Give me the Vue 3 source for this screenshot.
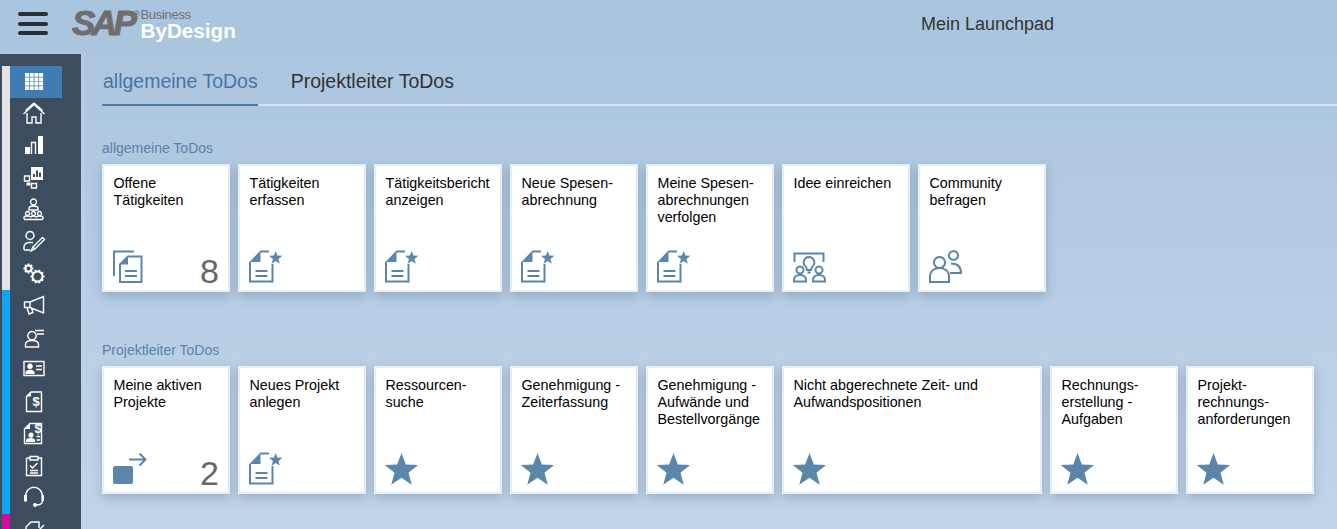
<script setup>
// star polygon, used by the tiles and the doc icons
const star = (cx, cy, R) => {
  let d = ''
  for (let i = 0; i < 10; i++) {
    const r = i % 2 ? R * 0.42 : R
    const a = -Math.PI / 2 + (i * Math.PI) / 5
    d += (i ? 'L' : 'M') + (cx + r * Math.cos(a)).toFixed(2) + ' ' + (cy + r * Math.sin(a)).toFixed(2)
  }
  return d + 'Z'
}

const gear = (cx, cy, r, n) => {
  let d = `M${cx - r} ${cy}a${r} ${r} 0 1 0 ${2 * r} 0a${r} ${r} 0 1 0 ${-2 * r} 0`
  for (let i = 0; i < n; i++) {
    const a = (i * 2 * Math.PI) / n
    const c = Math.cos(a)
    const s = Math.sin(a)
    d += `M${(cx + r * c).toFixed(2)} ${(cy + r * s).toFixed(2)}L${(cx + (r + 2) * c).toFixed(2)} ${(cy + (r + 2) * s).toFixed(2)}`
  }
  return d
}

const gridSquares = () => {
  let d = ''
  for (let y = 0; y < 4; y++) {
    for (let x = 0; x < 4; x++) {
      d += `M${3 + x * 4.7} ${3 + y * 4.4}h4v3.8h-4z`
    }
  }
  return d
}

const navTop = [
  { f: gridSquares() },
  { s: 'M1.5 12L12 2.5L22.5 12M3.5 8.5L12 1M12 1L20.500 8.500M5 11V21H10V15H14V21H19V11' },
  { s: 'M9.500 20V8.500H13.500V20', f: 'M3 13h5v7H3zM16 2h5v18h-5z' },
  { s: 'M2.500 10h5v5h-5zM9.500 17.500h5v4.500h-5z', f: 'M9 1h12v13H9zM4.500 16.500h4v3h-4z', d: 'M12 11V8M15 11V4.500M18 11V6.500' },
  { s: 'M11.500 1a3 3 0 1 0 .01 0M7 12v-1.500c0-1.500 2-2.500 4.500-2.500s4.500 1 4.500 2.500V12H7zM5.500 13.500a2 2 0 1 0 .01 0M11.500 13.500a2 2 0 1 0 .01 0M17.500 13.500a2 2 0 1 0 .01 0M2 21v-1.500c0-1 1.500-1.500 3.500-1.500s3 .5 3 1.500M9 19.500c0-1 1-1.500 2.500-1.500s2.500.5 2.500 1.500M14.500 19.500c0-1 1-1.500 3-1.500s3.500.5 3.500 1.500V21M2 21.500h19' },
  { s: 'M8 1.500a4 4 0 1 0 .01 0M2 20v-3c0-3 2.500-4.500 6-4.500h3M2 20h6M9 21l2-4 9.500-9.500 2 2L13 19zM11 17l2 2' },
  { s: gear(6.500, 6.500, 3, 8) + gear(15.500, 14.500, 5, 10), sw: 2 },
  { s: 'M21.500 2.500V19L8 13.500H2.500V8H8zM8 8V13.500M5 13.500L7 20L11 18.500L9.500 14' },
  { s: 'M10 5.500a4.200 4.200 0 1 0 .01 0M3.500 21v-2.500c0-2.500 2.500-4 6.500-4s6.500 1.500 6.500 4V21zM13 4.500h9M15 8h7' },
  { s: 'M2 3.500h20v14H2zM14 8h6M14 11.500h6', f: 'M8 5.500a2.800 2.800 0 1 1 -.01 0zM3.500 16v-1.500c0-2 2-2.800 4.500-2.800s4.500.8 4.500 2.800V16z' },
  { s: 'M9 2H19.500V21.500H4.500V6.500z', f: 'M4.500 6.500L9 2V6.500z', t: '$', tx: 14, ty: 15.500 },
  { s: 'M8 1.500H19.500V21.500H2.500V7z', f: 'M2.500 7L8 1.500V7zM9 10.500a2.600 2.600 0 1 1 -.01 0zM4 20v-1.500c0-1.800 2-2.500 4.500-2.500s4.500.7 4.500 2.500V20z', t: '$', tx: 16, ty: 11, extra: 'M14.500 14.500h3.500M14.500 18h3.500' },
  { s: 'M4.500 4H8M16 4h3.500V21.500H4.500V4M8 2.500h8V6H8zM8 11.500l2.500 2.500 5-5M8 16.500h8M8 19h8' },
  {
    s: 'M3.500 11C3.500 -2 20.500 -2 20.500 11V15C20.500 18 17 19 14 19',
    f: 'M2 9h3v6.500H2zM19.500 9H22v6h-2.500zM13 17a2 2 0 1 1 -.01 0z'
  },
  { s: 'M4 22V9L9 4H17V10M19 22V14', extra: 'M14 15L22 7' },
  { s: 'M3 21V9H21V21M6 9V2H15L18 5V9' }
]

const itemColor = (i) => (i < 7 ? 'gray' : i < 14 ? 'blue' : 'pink')

const docStack = {
  s: 'M1 26V1.500H21M15 6.500H28.500V32H7V14.500zM12 21H24M12 26H24',
  f: 'M7 14.500L15 6.500V14.500z'
}
const docStar = {
  s: 'M1 12V31.500H23.500V14M11 1.500H20M6.500 21H18.500M6.500 26H18.500',
  f: 'M.5 12L11.500 .5V12z' + star(26.700, 8, 7)
}
const bigStar = { f: star(16.500, 18.500, 17.500) }
const idea = {
  s: 'M1.500 12V3.500H30.500V12M16 7a5.500 5.500 0 0 0 -3 10l1 3h4l1 -3a5.500 5.500 0 0 0 -3 -10M14.500 22.500h3M7 16.500a3.500 3.500 0 1 0 .01 0M1 31.500v-1.500c0-3 2.500-5 6-5s6 2 6 5v1.500zM26 16.500a3.500 3.500 0 1 0 .01 0M20 31.500v-1.500c0-3 2.500-5 6-5s6 2 6 5v1.500z'
}
const people = {
  s: 'M10.500 7a5.500 5.500 0 1 0 .01 0M1 32v-5c0-6 4-9 9.500-9s9.500 3 9.500 9v5zM24.500 1a4.500 4.500 0 1 0 .01 0M22 13.500c6 0 10 2.500 10 9.500H21'
}
const moveOut = {
  s: 'M16 7.500H32M26.500 1.500L32.500 7.500L26.500 13.500',
  f: 'M2 14H18a2 2 0 0 1 2 2V30a2 2 0 0 1 -2 2H2a2 2 0 0 1 -2 -2V16a2 2 0 0 1 2 -2z'
}

const groups = [
  {
    title: 'allgemeine ToDos',
    tiles: [
      { lines: 'Offene Tätigkeiten', icon: docStack, count: 8 },
      { lines: 'Tätigkeiten erfassen', icon: docStar },
      { lines: 'Tätigkeitsbericht anzeigen', icon: docStar },
      { lines: 'Neue Spesen-abrechnung', icon: docStar },
      { lines: 'Meine Spesen-abrechnungen verfolgen', icon: docStar },
      { lines: 'Idee einreichen', icon: idea },
      { lines: 'Community befragen', icon: people }
    ]
  },
  {
    title: 'Projektleiter ToDos',
    tiles: [
      { lines: 'Meine aktiven Projekte', icon: moveOut, count: 2 },
      { lines: 'Neues Projekt anlegen', icon: docStar },
      { lines: 'Ressourcen-suche', icon: bigStar },
      { lines: 'Genehmigung - Zeiterfassung', icon: bigStar },
      { lines: 'Genehmigung - Aufwände und Bestellvorgänge', icon: bigStar },
      { lines: 'Nicht abgerechnete Zeit- und Aufwandspositionen', icon: bigStar, wide: true },
      { lines: 'Rechnungs-erstellung - Aufgaben', icon: bigStar },
      { lines: 'Projekt-rechnungs-anforderungen', icon: bigStar }
    ]
  }
]
</script>

<template>
  <div class="page">
    <header class="topbar">
      <button class="burger"><span></span><span></span><span></span></button>
      <div class="logo">
        <span class="sap">SAP</span>
        <span class="reg">®</span>
        <div class="product">
          <span class="business">Business</span>
          <span class="bydesign">ByDesign</span>
        </div>
      </div>
      <div class="page-title">Mein Launchpad</div>
    </header>

    <div class="body">
      <nav class="sidebar">
        <div
          v-for="(item, i) in navTop"
          :key="i"
          class="nav-item"
          :class="[itemColor(i), { selected: i === 0 }]"
        >
          <svg width="24" height="24" viewBox="0 0 24 24">
            <path v-if="item.f" :d="item.f" fill="#fff" fill-rule="evenodd" />
            <path v-if="item.s" :d="item.s" fill="none" stroke="#fff" :stroke-width="item.sw || 1.4" />
            <path v-if="item.extra" :d="item.extra" fill="none" stroke="#fff" stroke-width="1.4" />
            <path v-if="item.d" :d="item.d" fill="none" stroke="#3c4d5f" stroke-width="2" />
            <text v-if="item.t" :x="item.tx" :y="item.ty" class="dollar">{{ item.t }}</text>
          </svg>
        </div>
      </nav>

      <main class="content">
        <div class="tabs">
          <div class="tab active">allgemeine ToDos</div>
          <div class="tab">Projektleiter ToDos</div>
        </div>

        <section v-for="group in groups" :key="group.title" class="group">
          <h2>{{ group.title }}</h2>
          <div class="tiles">
            <div
              v-for="tile in group.tiles"
              :key="tile.lines"
              class="tile"
              :class="{ wide: tile.wide }"
            >
              <div class="tile-title">{{ tile.lines }}</div>
              <div class="tile-foot">
                <svg width="34" height="33" viewBox="0 0 34 33">
                  <path v-if="tile.icon.f" :d="tile.icon.f" fill="#5b85ab" />
                  <path v-if="tile.icon.s" :d="tile.icon.s" fill="none" stroke="#5b85ab" stroke-width="2" />
                </svg>
                <span v-if="tile.count" class="count">{{ tile.count }}</span>
              </div>
            </div>
          </div>
        </section>
      </main>
    </div>
  </div>
</template>

<style scoped>
.page {
  height: 529px;
  overflow: hidden;
  background: linear-gradient(180deg, #a9c4de 0%, #c1d5e8 100%);
  font-family: "Liberation Sans", Arial, sans-serif;
  color: #000;
}

.topbar {
  height: 54px;
  display: flex;
  align-items: flex-start;
  position: relative;
}

.burger {
  width: 30px;
  margin: 12px 0 0 18px;
  padding: 0;
  border: none;
  background: none;
  display: flex;
  flex-direction: column;
  gap: 5.5px;
}

.burger span {
  display: block;
  height: 4px;
  border-radius: 2px;
  background: #2b2f33;
}

.logo {
  display: flex;
  margin-left: 24px;
  height: 54px;
}

.sap {
  font-size: 35px;
  line-height: 46px;
  font-weight: 700;
  font-style: italic;
  letter-spacing: -3.5px;
  color: #6e6e6e;
  -webkit-text-stroke: 1px #6e6e6e;
}

.reg {
  width: 7px;
  font-size: 9px;
  line-height: 10px;
  margin-top: 9px;
  color: #6e6e6e;
}

.product {
  display: flex;
  flex-direction: column;
  padding-top: 8px;
}

.business {
  font-size: 13px;
  line-height: 13px;
  letter-spacing: -0.3px;
  color: #6e6e6e;
}

.bydesign {
  font-size: 20.7px;
  line-height: 19px;
  font-weight: 700;
  color: #fff;
}

.page-title {
  position: absolute;
  left: 921px;
  top: 13px;
  font-size: 18px;
  line-height: 22px;
  color: #333;
}

.body {
  display: flex;
}

.sidebar {
  width: 79px;
  height: 475px;
  padding: 12px 0 0 2px;
  background: #3c4d5f;
  box-shadow: 3px 0 3px rgba(200, 215, 235, 0.5);
  overflow: hidden;
  flex-shrink: 0;
}

.nav-item {
  width: 40px;
  height: 32px;
  border-left: 8px solid #e3e3e3;
  display: flex;
  align-items: center;
  padding-left: 12px;
}

.nav-item.blue {
  border-left-color: #0ea5f0;
}

.nav-item.pink {
  border-left-color: #d4089a;
}

.nav-item.selected {
  background: #3e7cb1;
}

.dollar {
  font-size: 13px;
  font-weight: 700;
  text-anchor: middle;
  fill: #fff;
}

.content {
  flex: 1;
  padding-left: 21px;
}

.tabs {
  display: flex;
  gap: 32px;
  height: 52px;
  box-sizing: border-box;
  border-bottom: 2px solid #d3e2f1;
  font-size: 19.5px;
}

.tab {
  height: 52px;
  box-sizing: border-box;
  padding: 15px 0 0 1px;
  line-height: 24px;
  color: #333;
}

.tab.active {
  color: #4a75a0;
  border-bottom: 2px solid #4a7bb0;
}

.group {
  margin-top: 34px;
}

.group + .group {
  margin-top: 50px;
}

h2 {
  margin: 0 0 8px;
  font-size: 14px;
  line-height: 16px;
  font-weight: 400;
  color: #5a82a8;
}

.tiles {
  display: flex;
  gap: 8px;
}

.tile {
  width: 128px;
  height: 128px;
  box-sizing: border-box;
  padding: 9px 4px 7px 9px;
  background: #fff;
  border: 2px solid #e8eef5;
  box-shadow: 0 4px 10px rgba(60, 90, 120, 0.3);
  display: flex;
  flex-direction: column;
  justify-content: space-between;
}

.tile.wide {
  width: 260px;
}

.tile-title {
  padding-left: 0.5px;
  font-size: 14.3px;
  line-height: 17px;
  overflow-wrap: break-word;
}

.tile-foot {
  display: flex;
  justify-content: space-between;
  align-items: flex-end;
  padding-right: 5px;
}

.tile-foot svg {
  display: block;
}

.count {
  font-size: 34px;
  line-height: 34px;
  margin-bottom: -5px;
  color: #666;
}
</style>

<style>
html,
body {
  margin: 0;
  background: #b5cce3;
}
</style>
